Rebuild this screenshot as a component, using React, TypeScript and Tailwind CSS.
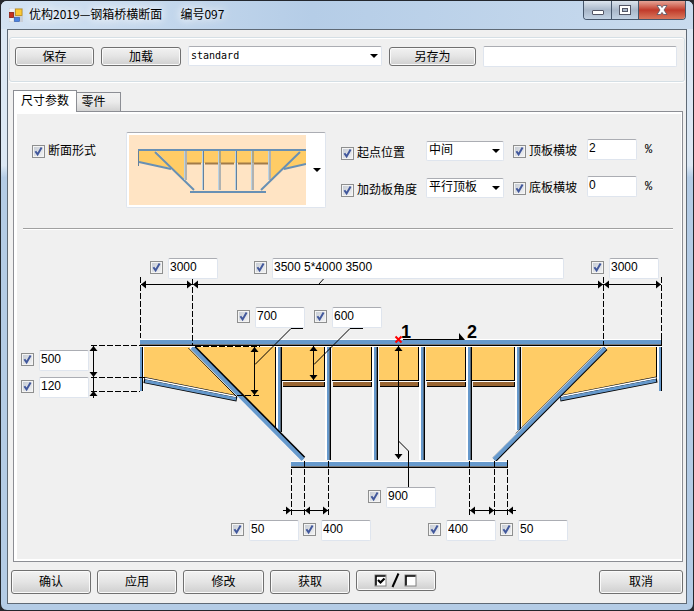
import React from "react";

const FONT =
  'font-["Liberation_Sans","Noto_Sans_CJK_SC",sans-serif] text-[12px] leading-[16px] text-black';

const BOX =
  "rounded-[2px] border border-[#dfe5ee] border-t-[#abadb3] bg-white outline-none";

function Check({ name, className = "" }: { name: string; className?: string }) {
  return (
    <span className={`grid h-[13px] w-[13px] shrink-0 ${className}`}>
      <input
        type="checkbox"
        id={name}
        aria-label={name}
        defaultChecked
        className="peer col-start-1 row-start-1 m-0 h-[13px] w-[13px] appearance-none border border-[#8e8f8f] bg-linear-to-br from-[#c3c9d2] to-[#f6f6f6] shadow-[inset_0_0_0_1px_#f4f4f4]"
      />
      <svg
        viewBox="0 0 13 13"
        className="pointer-events-none invisible col-start-1 row-start-1 h-[13px] w-[13px] peer-checked:visible"
        aria-hidden="true"
      >
        <path d="M3.4 6.2 L5.6 9.4 L9.6 2.6" fill="none" stroke="#42589c" strokeWidth="2" />
      </svg>
    </span>
  );
}

function LabeledCheck({ text }: { text: string }) {
  return (
    <div className="flex h-[20px] items-center gap-[3px]">
      <Check name={text} />
      <label htmlFor={text} className="whitespace-nowrap">
        {text}
      </label>
    </div>
  );
}

function Select({
  label,
  options,
  className,
  mono = false,
}: {
  label: string;
  options: string[];
  className: string;
  mono?: boolean;
}) {
  return (
    <span className={`grid h-[20px] ${className}`}>
      <select
        aria-label={label}
        className={`col-start-1 row-start-1 h-[20px] w-full min-w-0 appearance-none pl-[2px] ${BOX} ${
          mono ? 'font-["DejaVu_Sans_Mono",monospace] text-[10px]' : "pb-[2px]"
        }`}
      >
        {options.map((o) => (
          <option key={o}>{o}</option>
        ))}
      </select>
      <svg
        viewBox="0 0 8 4"
        className="pointer-events-none col-start-1 row-start-1 mr-[4px] h-[4px] w-[8px] self-center justify-self-end"
        aria-hidden="true"
      >
        <path d="M0 0H8L4 4Z" />
      </svg>
    </span>
  );
}

function Button({ children, className = "h-[24px] w-[80px]" }: { children: React.ReactNode; className?: string }) {
  return (
    <button
      type="button"
      className={`flex shrink-0 items-center justify-center rounded-[3px] border border-[#707070] bg-linear-to-b from-[#f2f2f2] via-[#e4e4e4] via-50% to-[#cfcfcf] shadow-[inset_0_0_0_1px_#fafafa] ${className}`}
    >
      {children}
    </button>
  );
}

const SHEET = "#ffcc66";
const STEEL = "#6699cc";
const steelStroke = "#6890b4";

function Thumbnail() {
  return (
    <svg viewBox="0 0 177 70" className="h-[70px] w-[177px] bg-[#ffe4c4]" aria-hidden="true">
      <g fill={SHEET}>
        <path d="M10 16H26L42 33L10 27Z" />
        <path d="M27 16H55V45Z" />
        <path d="M58 16H140V28H58Z" />
        <path d="M142 16H171L142 45Z" />
        <path d="M171 16H177V29L155 33Z" />
      </g>
      <g stroke="#a27b48" strokeWidth="2">
        <path d="M58 28.5H72M76 28.5H89M92 28.5H105M109 28.5H122M125 28.5H139" />
      </g>
      <g stroke={steelStroke} strokeWidth="2" fill="none">
        <path d="M9 15H177" />
        <path d="M26 17L65 55M171 17L132 55" />
        <path d="M10 27L42 34M177 29L155 34" />
        <path d="M61 57H137" />
      </g>
      <g stroke="#b8d2e4" strokeWidth="1">
        <path d="M55.5 16V45M73.5 16V55M89.5 16V55M106.5 16V55M122.5 16V55M139.5 16V45" />
      </g>
      <g stroke="#64809c" strokeWidth="1">
        <path d="M9.5 16V31M57 16V45M74.5 16V55M91 16V55M107.5 16V55M124 16V55M141 16V45" />
      </g>
    </svg>
  );
}

type Dir = "l" | "r" | "u" | "d";

function Arrow({ x, y, d }: { x: number; y: number; d: Dir }) {
  const angle = { r: 0, d: 90, l: 180, u: 270 }[d];
  return <path d="M0 0L-5 -4V4Z" fill="black" transform={`translate(${x} ${y}) rotate(${angle})`} />;
}

const BAYS = [
  [282, 325],
  [332, 372],
  [379, 419],
  [426, 466],
  [472, 515],
];

const STIFFENERS = [
  [277, 432],
  [326, 460],
  [373, 460],
  [420, 460],
  [467, 460],
  [516, 430],
];

const ARROWS: [number, number, Dir][] = [
  [141, 284.5, "l"], [192, 284.5, "r"], [193, 284.5, "l"], [603, 284.5, "r"], [604, 284.5, "l"], [661, 284.5, "r"],
  [93.5, 346, "u"], [93.5, 377, "d"], [93.5, 391, "u"],
  [254.5, 347, "u"], [254.5, 395, "d"],
  [313.5, 346, "u"], [313.5, 380, "d"],
  [398.5, 346, "u"], [398.5, 459, "d"],
  [291, 510.5, "r"], [305, 510.5, "l"], [328, 510.5, "r"],
  [470, 510.5, "l"], [494, 510.5, "r"], [508, 510.5, "l"],
];

function SectionDrawing() {
  return (
    <svg viewBox="17 230 664 329" className="block h-[329px] w-[664px]" role="img" aria-label="钢箱桥横断面">
      <g fill={SHEET}>
        <path d="M144 347H190L237 396L144 377Z" />
        <path d="M196 347H275V428Z" />
        <path d="M522 347H602L522 427Z" />
        <path d="M608 347H656V377L561 397Z" />
      </g>
      <path d="M275.5 347V427M656.5 347V377" stroke="black" />

      {/* transverse stiffener plates between the webs */}
      <g shapeRendering="crispEdges">
        {BAYS.map(([a, b]) => (
          <g key={a}>
            <rect x={a} y="347" width={b - a} height="34" fill={SHEET} />
            <rect x={a} y="380" width={b - a} height="1" />
            <rect x={b - 1} y="347" width="1" height="34" />
            <rect x={a} y="381" width={b - a} height="1" fill="white" />
            <rect x={a + 1} y="382" width={b - a - 1} height="5" />
            <rect x={a + 1} y="382" width={b - a - 2} height="4" fill="#996633" />
          </g>
        ))}
        {STIFFENERS.map(([x, bottom]) => (
          <g key={x}>
            <rect x={x - 1} y="347" width="1" height={bottom - 347} fill="white" />
            <rect x={x} y="347" width="1" height={bottom - 347} fill="white" />
            <rect x={x + 1} y="347" width="3" height={bottom - 347} fill={STEEL} />
            <rect x={x + 3} y="347" width="1" height={bottom - 347} fill="#56697c" />
            <rect x={x + 4} y="347" width="1" height={bottom - 347} />
          </g>
        ))}
        <rect x="140" y="347" width="2" height="44" fill={STEEL} />
        <rect x="142" y="347" width="1" height="44" />
        <rect x="143" y="347" width="1" height="44" fill="white" />
        <rect x="657" y="347" width="2" height="32" fill="white" />
        <rect x="659" y="347" width="2" height="44" fill={STEEL} />
        <rect x="661" y="347" width="1" height="44" />
      </g>

      {/* cantilever bottom plates */}
      <g fill="none">
        <path d="M144 380L237 398.5" stroke="black" strokeWidth="6" />
        <path d="M145 378.5L236 396.5" stroke="white" strokeWidth="1.5" />
        <path d="M145 381L236 399" stroke={STEEL} strokeWidth="3" />
        <path d="M657 379.5L560 398.5" stroke="black" strokeWidth="6" />
        <path d="M656 378L560.5 396.5" stroke="white" strokeWidth="1.5" />
        <path d="M656 380.5L560.5 399" stroke={STEEL} strokeWidth="3" />
      </g>

      {/* inclined webs */}
      <g fill="none">
        <path d="M193 347L303.5 458.5" stroke="black" strokeWidth="5" />
        <path d="M188.5 348L237 397" stroke="black" />
        <path d="M190 347.5L301.5 460" stroke="white" strokeWidth="2" />
        <path d="M192 347.5L303 459.5" stroke={STEEL} strokeWidth="4" />
        <path d="M605.5 348L494.5 459.5" stroke="black" strokeWidth="5.4" />
        <path d="M601.5 348L516 433.5" stroke="black" />
        <path d="M603 347.5L493 458" stroke="white" strokeWidth="1.6" />
        <path d="M605 348L494 459.5" stroke={STEEL} strokeWidth="4" />
      </g>

      {/* top and bottom flanges */}
      <g shapeRendering="crispEdges">
        <rect x="140" y="339" width="522" height="1" fill="white" />
        <rect x="140" y="340" width="522" height="4" fill={STEEL} />
        <rect x="140" y="344" width="522" height="1" fill="#777" />
        <rect x="140" y="345" width="522" height="1" />
        <rect x="140" y="346" width="522" height="1" fill="white" />
        <rect x="661" y="339" width="1" height="7" />
        <rect x="291" y="461" width="217" height="1" fill="white" />
        <rect x="291" y="462" width="217" height="4" fill={STEEL} />
        <rect x="291" y="466" width="217" height="1" fill="#777" />
        <rect x="291" y="467" width="217" height="1" />
        <rect x="507" y="460" width="1" height="8" />
      </g>

      {/* extension lines */}
      <g stroke="black" fill="none" strokeDasharray="6 2" shapeRendering="crispEdges">
        <path d="M140.5 277V338M192.5 279V345M603.5 277V345M661.5 277V340" />
        <path d="M91 345.5H140M91 377.5H146M91 391.5H140" />
        <path d="M195 346.5H260M237 395.5H260" />
        <path d="M291.5 469V515M304.5 461V515M328.5 461V515M469.5 461V515M494.5 461V515M507.5 469V515" />
      </g>

      {/* dimension lines and leaders */}
      <g stroke="black" fill="none">
        <path d="M141 284.5H661M319 284L323.5 279" />
        <path d="M93.5 346V398M254.5 347V395M313.5 346V380M398.5 346V459" />
        <path d="M255 364.5L291 328.5H303M314 364.5L350 328.5H363" />
        <path d="M398.5 441L408.5 451V487" />
        <path d="M283 510.5H328M470 510.5H516" />
        <path d="M403 339.5H464" />
      </g>
      <path d="M459 333V340H465Z" />
      {ARROWS.map(([x, y, d]) => (
        <Arrow key={`${x}-${y}-${d}`} x={x} y={y} d={d} />
      ))}

      <path d="M395.5 336.5L401.5 342.5M401.5 336.5L395.5 342.5" stroke="red" strokeWidth="2" />
      <g className='font-["Liberation_Sans",sans-serif] text-[18px] font-bold'>
        <text x="401" y="338">1</text>
        <text x="467" y="338">2</text>
      </g>
    </svg>
  );
}

const DIMENSIONS = [
  { name: "左悬臂宽", value: "3000", at: "left-[133px] top-[28px]", width: "w-[50px]" },
  { name: "顶板分段", value: "3500 5*4000 3500", at: "left-[237px] top-[28px]", width: "w-[292px]" },
  { name: "右悬臂宽", value: "3000", at: "left-[574px] top-[28px]", width: "w-[50px]" },
  { name: "斜板高", value: "700", at: "left-[220px] top-[77px]", width: "w-[50px]" },
  { name: "加劲板高", value: "600", at: "left-[297px] top-[77px]", width: "w-[50px]" },
  { name: "悬臂高", value: "500", at: "left-[4px] top-[120px]", width: "w-[50px]" },
  { name: "端部高", value: "120", at: "left-[4px] top-[147px]", width: "w-[50px]" },
  { name: "箱高", value: "900", at: "left-[351px] top-[257px]", width: "w-[50px]" },
  { name: "左外伸", value: "50", at: "left-[214px] top-[290px]", width: "w-[50px]" },
  { name: "左底板段", value: "400", at: "left-[286px] top-[290px]", width: "w-[50px]" },
  { name: "右底板段", value: "400", at: "left-[411px] top-[290px]", width: "w-[50px]" },
  { name: "右外伸", value: "50", at: "left-[483px] top-[290px]", width: "w-[50px]" },
];

function TitleBar() {
  return (
    <header className="flex h-[28px] items-start bg-linear-to-r from-[#d3e2f2] via-[#b5cde7] via-45% to-[#c9dbee] pr-[7px] pl-[8px]">
      <svg viewBox="0 0 14 14" className="mt-[7px] h-[14px] w-[14px]" aria-hidden="true">
        <rect width="14" height="14" fill="#c9ced6" />
        <rect x="0.5" y="0.5" width="5" height="3.5" fill="#eef1f5" />
        <rect x="0.5" y="10" width="4" height="3.5" fill="#eef1f5" />
        <rect x="0.5" y="4.5" width="4" height="5" fill="#c8321e" stroke="#8c1f14" strokeWidth="0.8" />
        <rect x="6.5" y="1" width="6.5" height="6.5" fill="#fbc835" stroke="#b98a14" strokeWidth="0.8" />
        <rect x="5.5" y="9.5" width="5" height="4" fill="#4b83e0" stroke="#2a57ac" strokeWidth="0.6" />
      </svg>
      <h1 className='ml-[6px] mt-[5px] flex gap-[18px] font-["Noto_Sans_CJK_SC",sans-serif] text-[12px] leading-[16px] font-normal whitespace-nowrap [text-shadow:0_0_8px_white,0_0_12px_white]'>
        <span>优构2019—钢箱桥横断面</span>
        <span>编号097</span>
      </h1>
      <div className="ml-auto flex h-[19px] overflow-hidden rounded-b-[4px] border border-t-0 border-[#46566b]">
        <button
          type="button"
          aria-label="最小化"
          className="flex w-[28px] items-center justify-center border-r border-[#46566b] bg-linear-to-b from-[#dde5ee] via-[#a9b7c9] via-50% to-[#c2d2e4]"
        >
          <span className="mt-[5px] h-[5px] w-[12px] rounded-[1px] border border-[#535666] bg-white" />
        </button>
        <button
          type="button"
          aria-label="最大化"
          className="flex w-[27px] items-center justify-center border-r border-[#46566b] bg-linear-to-b from-[#dde5ee] via-[#a9b7c9] via-50% to-[#c2d2e4]"
        >
          <svg viewBox="0 0 12 10" className="h-[10px] w-[12px]" aria-hidden="true">
            <rect x="0.5" y="0.5" width="11" height="9" fill="white" stroke="#535666" />
            <rect x="3.5" y="3.5" width="5" height="3" fill="#a9b7c9" stroke="#535666" />
          </svg>
        </button>
        <button
          type="button"
          aria-label="关闭"
          className="flex w-[46px] items-center justify-center bg-linear-to-b from-[#e5a497] via-[#c0392a] via-50% to-[#d9765c]"
        >
          <svg viewBox="0 0 12 10" className="h-[10px] w-[12px]" aria-hidden="true">
            <path d="M1 .5H4.5L6 2.6L7.5 .5H11L8 5L11 9.5H7.5L6 7.4L4.5 9.5H1L4 5Z" fill="white" stroke="#535666" strokeWidth="0.8" />
          </svg>
        </button>
      </div>
    </header>
  );
}

export default function App() {
  return (
    <div className={`min-h-screen bg-[#26282e] ${FONT}`}>
      <div className="flex min-h-screen flex-col overflow-hidden rounded-[7px] border border-[#23272e] bg-linear-to-b from-[#dce8f4] from-27% to-[#b4cce6] to-29%">
        <TitleBar />
        <main className="mx-[6px] mb-[6px] flex flex-1 flex-col border border-[#5f6a76] bg-[#f0f0f0] px-px">
          <section
            aria-label="配置"
            className="mt-[7px] grid h-[45px] grid-cols-[79px_80px_1fr_87px_1fr] items-start gap-[7px] rounded-[3px] border border-[#d5dfe5] pt-[8px] pr-[7px] pl-[5px] shadow-[inset_0_1px_0_white,0_1px_0_white]"
          >
            <Button className="mt-px h-[19px]">保存</Button>
            <Button className="mt-px h-[19px]">加载</Button>
            <Select label="模板" options={["standard"]} className="min-w-0" mono />
            <Button className="mt-px h-[19px]">另存为</Button>
            <input aria-label="新名称" className={`h-[21px] w-full min-w-0 px-[2px] ${BOX}`} />
          </section>

          <div role="tablist" className="mt-[8px] ml-[4px] flex items-end">
            <button
              type="button"
              role="tab"
              aria-selected="true"
              className="relative z-10 -mb-px h-[22px] w-[64px] border border-b-0 border-[#8c8e94] bg-white pb-px"
            >
              尺寸参数
            </button>
            <button
              type="button"
              role="tab"
              aria-selected="false"
              className="h-[19px] w-[44px] border border-b-0 border-l-0 border-[#8c8e94] bg-linear-to-b from-[#f2f2f2] via-[#ebebeb] via-50% to-[#d2d2d2] pr-[10px]"
            >
              零件
            </button>
          </div>

          <div
            role="tabpanel"
            className="mr-[2px] ml-[4px] border border-[#8c8e94] bg-white pt-[2px] pr-px pb-[2px] pl-[3px]"
          >
            <div className="h-[445px] bg-[#f0f0f0]">
              <div className="flex h-[114px] items-start pt-[18px] pl-[15px]">
                <div className="mt-[9px] w-[94px]">
                  <LabeledCheck text="断面形式" />
                </div>
                <button
                  type="button"
                  aria-haspopup="listbox"
                  aria-label="断面形式图"
                  className={`flex h-[76px] w-[200px] items-center gap-[7px] pl-[2px] ${BOX}`}
                >
                  <Thumbnail />
                  <svg viewBox="0 0 8 4" className="h-[4px] w-[8px]" aria-hidden="true">
                    <path d="M0 0H8L4 4Z" />
                  </svg>
                </button>
                <div className="mt-[11px] ml-[15px] flex w-[85px] flex-col gap-[17px]">
                  <LabeledCheck text="起点位置" />
                  <LabeledCheck text="加劲板角度" />
                </div>
                <div className="mt-[9px] flex flex-col gap-[17px]">
                  <Select label="起点位置选项" options={["中间", "左侧", "右侧"]} className="w-[78px]" />
                  <Select label="加劲板角度选项" options={["平行顶板", "竖直"]} className="w-[78px]" />
                </div>
                <div className="mt-[9px] ml-[9px] flex w-[74px] flex-col gap-[17px]">
                  <LabeledCheck text="顶板横坡" />
                  <LabeledCheck text="底板横坡" />
                </div>
                <div className="mt-[7px] flex flex-col gap-[16px]">
                  {[
                    ["顶板横坡值", "2"],
                    ["底板横坡值", "0"],
                  ].map(([name, value]) => (
                    <div key={name} className="flex items-center gap-[8px]">
                      <input
                        aria-label={name}
                        defaultValue={value}
                        className={`h-[21px] w-[50px] pb-[3px] pl-px ${BOX}`}
                      />
                      <span className='font-["Liberation_Mono",monospace]'>%</span>
                    </div>
                  ))}
                </div>
              </div>
              <hr className="mr-[8px] ml-[6px] h-[2px] border-0 border-t border-b border-t-[#a0a0a0] border-b-white" />
              <div className="relative w-[664px]">
                <SectionDrawing />
                {DIMENSIONS.map((d) => (
                  <div key={d.name} className={`absolute flex items-start gap-[5px] ${d.at}`}>
                    <Check name={d.name} className="mt-[3px]" />
                    <input
                      aria-label={`${d.name}值`}
                      defaultValue={d.value}
                      className={`h-[21px] pb-[3px] pl-px ${d.width} ${BOX}`}
                    />
                  </div>
                ))}
              </div>
            </div>
          </div>

          <footer className="mt-[8px] flex items-start gap-[6px] pr-[2px] pb-[8px] pl-[2px]">
            <Button>确认</Button>
            <Button>应用</Button>
            <Button className="h-[24px] w-[81px]">修改</Button>
            <Button>获取</Button>
            <Button className="h-[21px] w-[80px]">
              <svg viewBox="0 0 44 16" className="h-[16px] w-[44px]" aria-label="全选/全不选">
                <g fill="white" stroke="#808080">
                  <rect x="1" y="2" width="11" height="11" />
                  <rect x="31" y="2" width="11" height="11" />
                </g>
                <path d="M2 12.5V3H11.5M32 12.5V3H41.5" fill="none" stroke="black" strokeWidth="1.6" />
                <path d="M4 7L6.5 9.5L10.5 5.5" fill="none" stroke="black" strokeWidth="2.2" />
                <path d="M24.5 0.5L18.5 14" stroke="black" strokeWidth="2" />
              </svg>
            </Button>
            <Button className="ml-auto h-[24px] w-[84px]">取消</Button>
          </footer>
        </main>
      </div>
    </div>
  );
}
